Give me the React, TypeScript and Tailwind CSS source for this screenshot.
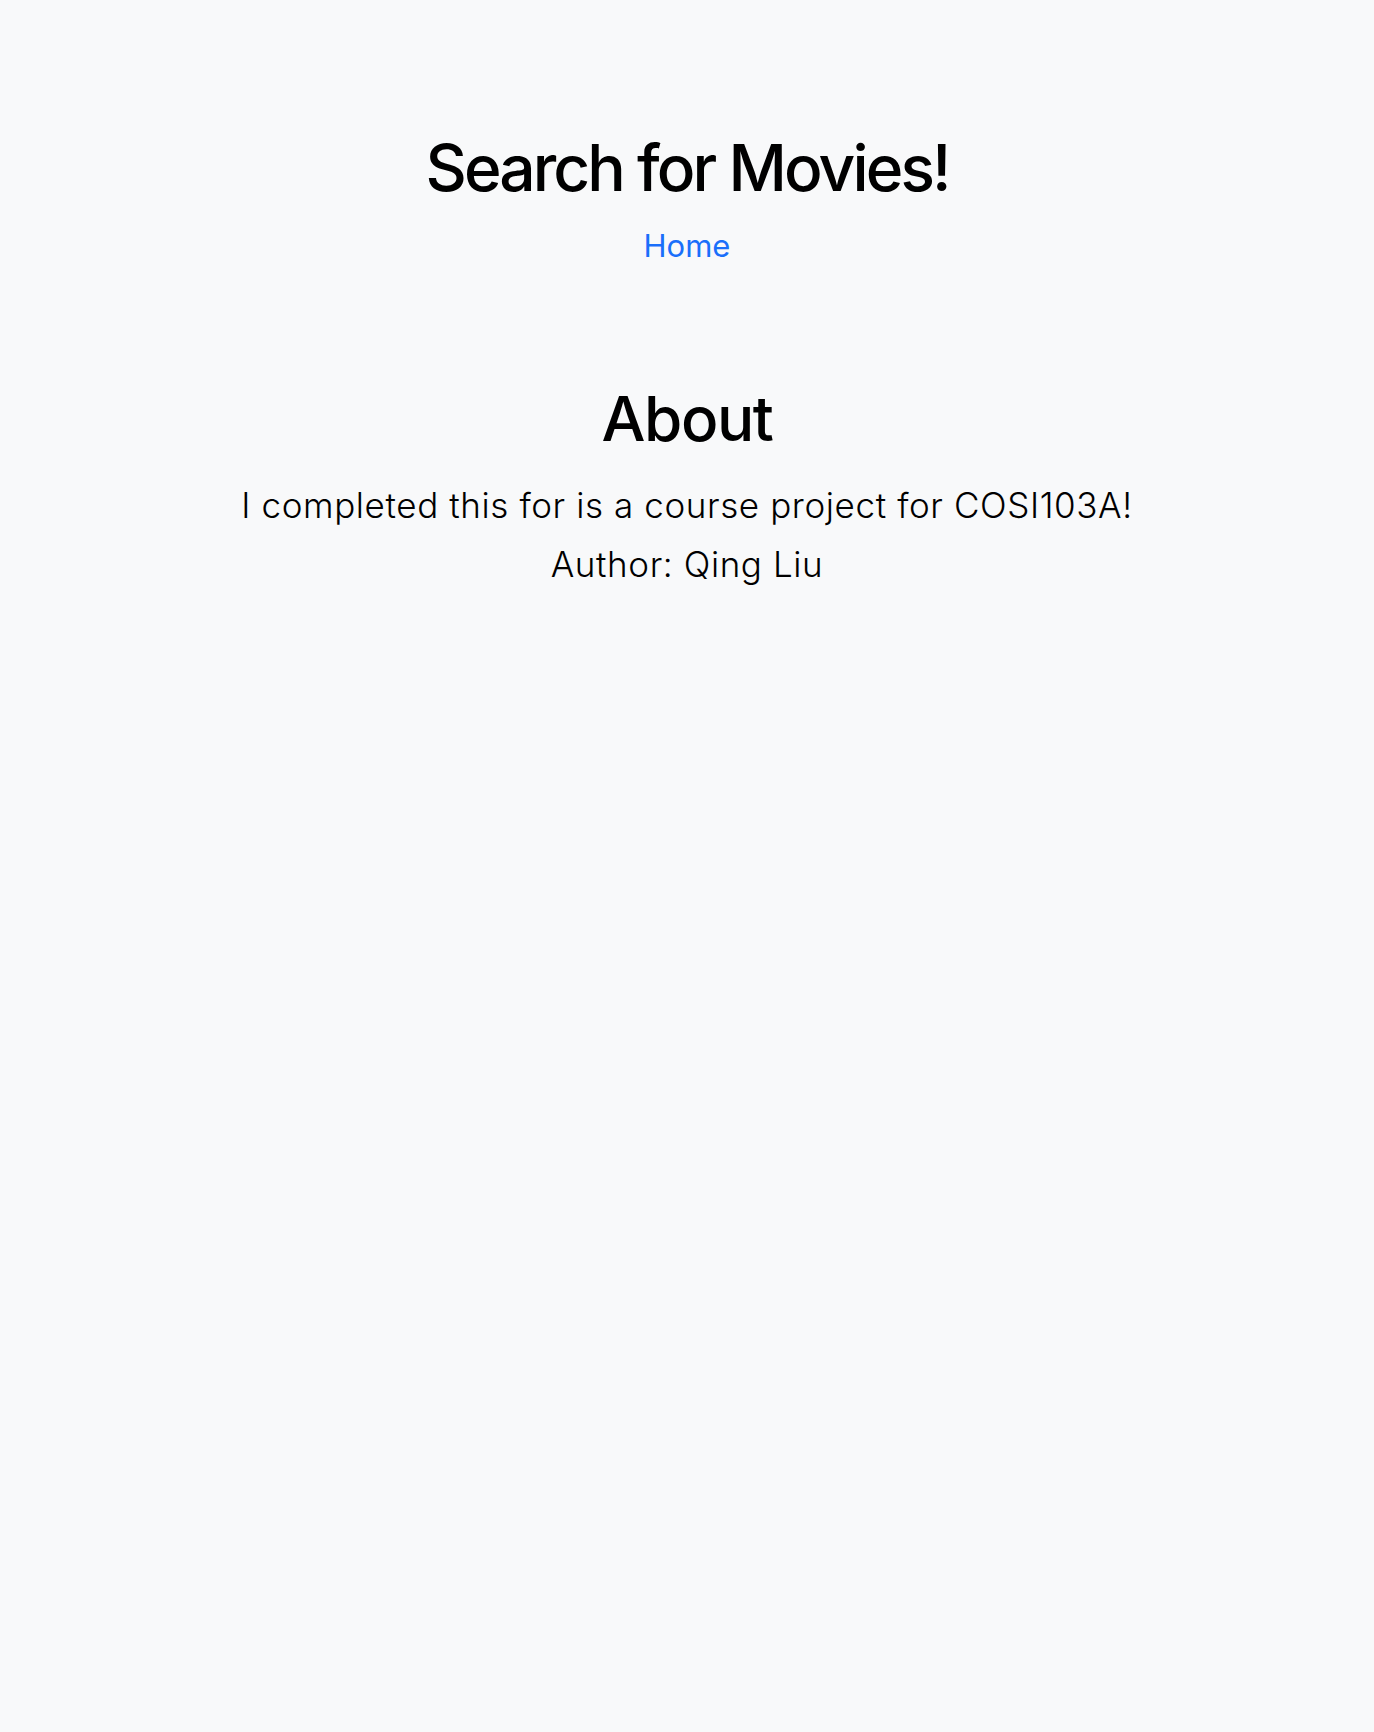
export default function App() {
  return (
    <div className="min-h-[1732px] w-full bg-[#f8f9fa] text-black" style={{ fontFamily: 'Inter, "Noto Sans", sans-serif' }}>
      <div className="flex flex-col items-center pt-[129px]">
        <h1 className="text-[64px] leading-[78px] font-medium tracking-[-2.9px]">Search for Movies!</h1>
        <a href="#" className="mt-[16px] text-[31px] leading-[46px] text-[#1a6ffa]">Home</a>
        <h2 className="mt-[113px] text-[62px] leading-[74px] font-medium tracking-[-1.4px]">About</h2>
        <p className="mt-[20px] text-[35px] leading-[59px] font-light tracking-[0.6px]">I completed this for is a course project for COSI103A!</p>
        <p className="text-[35px] leading-[59px] font-light tracking-[0.6px]">Author: Qing Liu</p>
      </div>
    </div>
  );
}
